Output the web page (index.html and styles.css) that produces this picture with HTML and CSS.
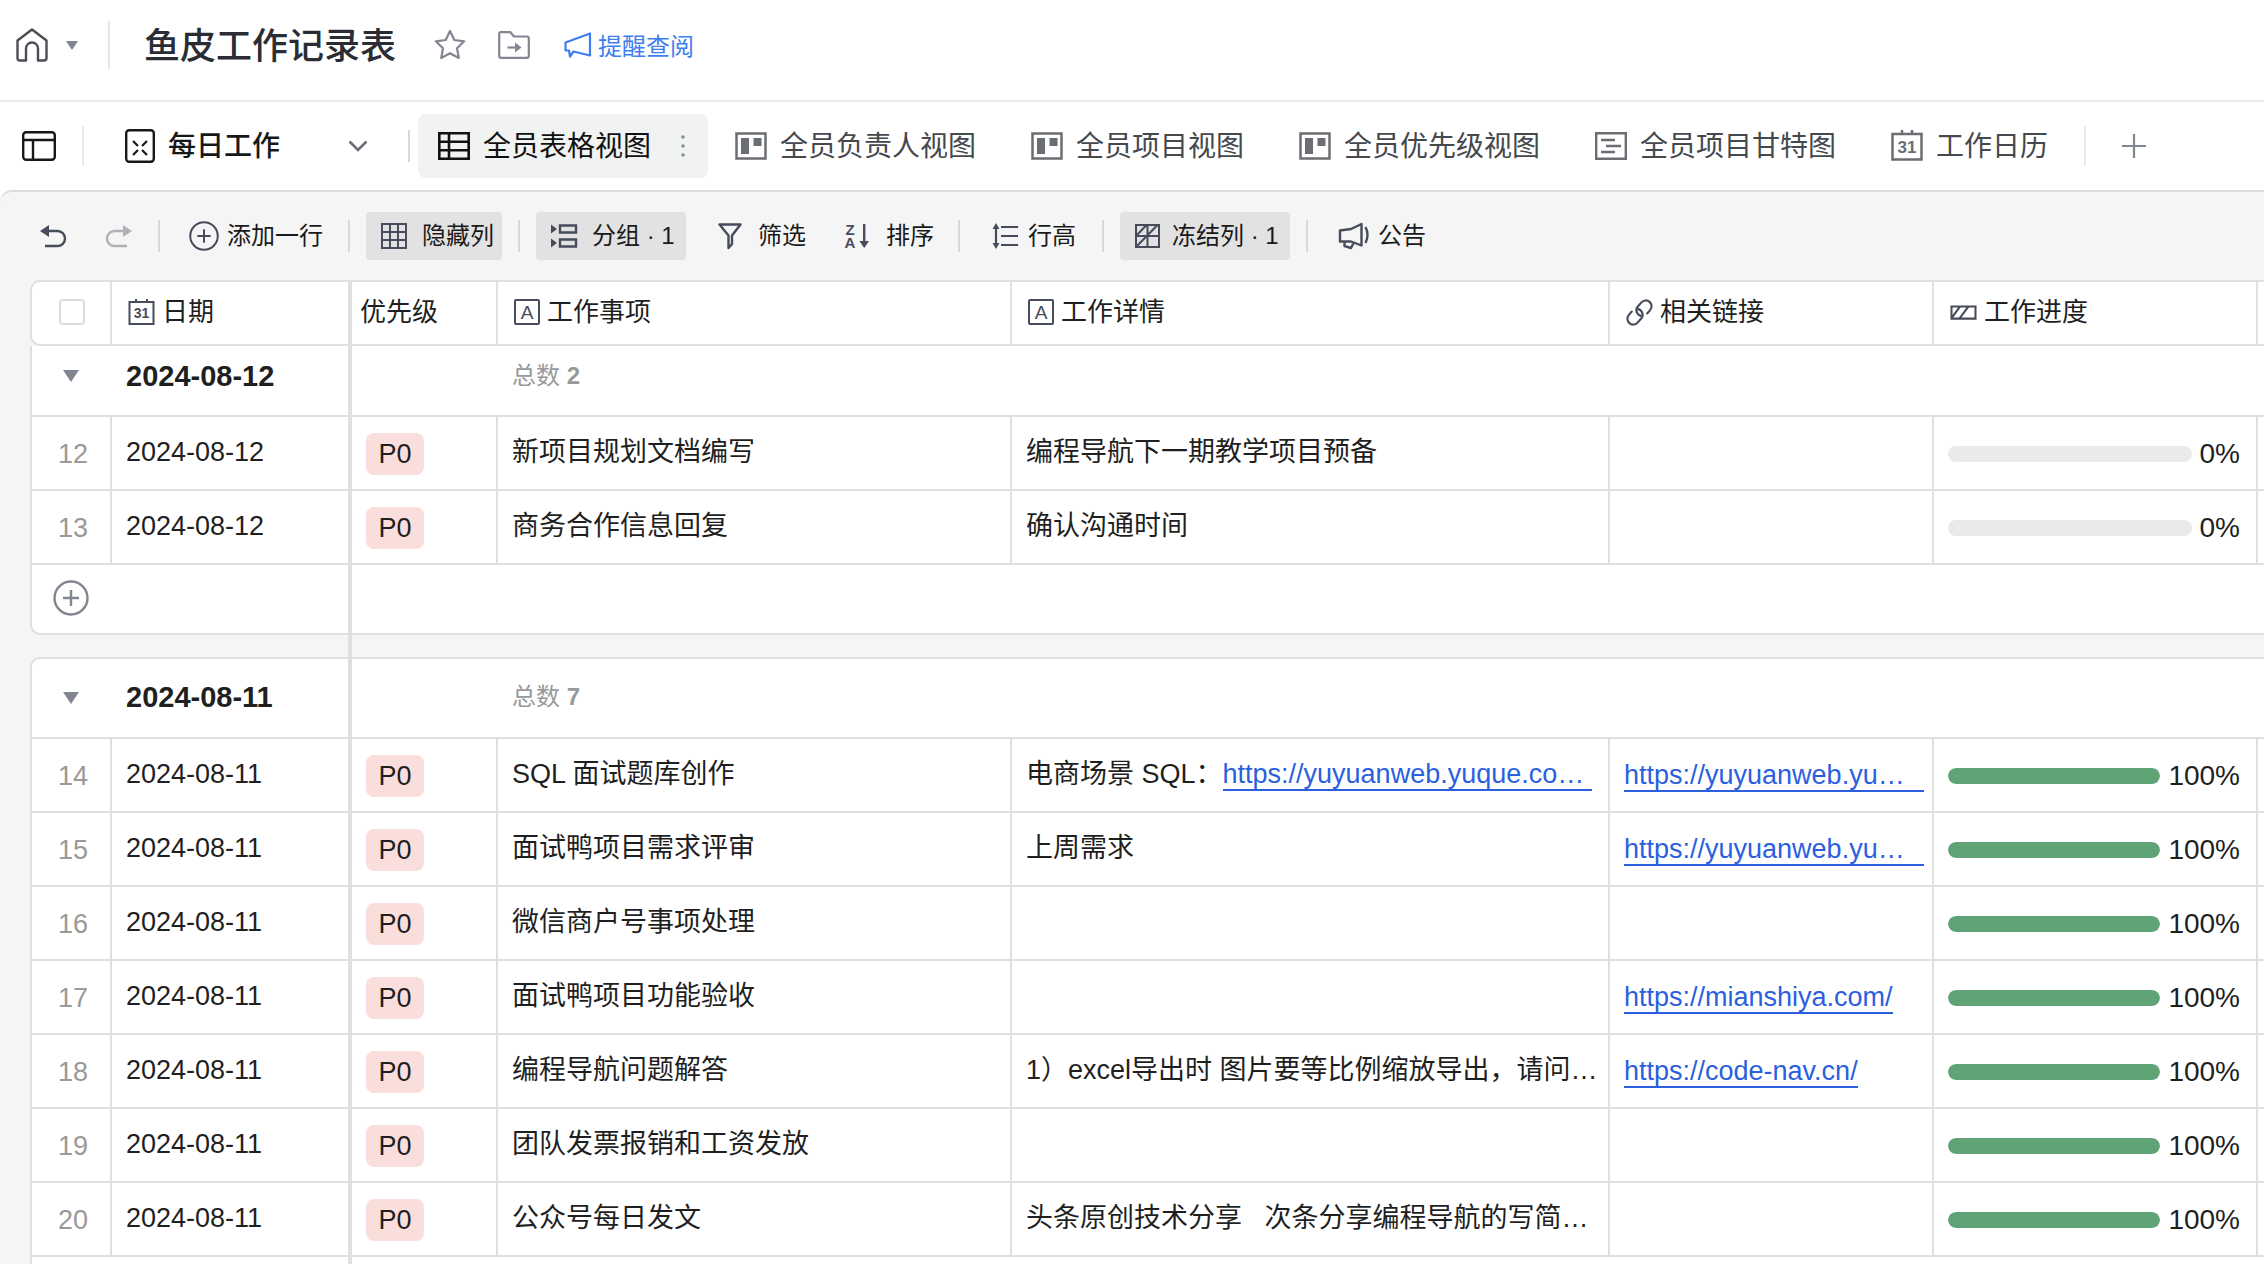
FILE: index.html
```html
<!DOCTYPE html>
<html lang="zh-CN">
<head>
<meta charset="utf-8">
<meta name="viewport" content="width=device-width, initial-scale=1">
<title>鱼皮工作记录表</title>
<link rel="stylesheet" href="styles.css">
</head>
<body>
<svg class="sprite" aria-hidden="true">
  <symbol id="i-board" viewBox="0 0 32 28"><rect x="1.5" y="1.5" width="29" height="25" fill="none" stroke="currentColor" stroke-width="2.5"/><path d="M6 6h8v16H6zM18.500 6h8v8h-8z" fill="currentColor"/></symbol>
  <symbol id="i-plus-circle" viewBox="0 0 36 36"><circle cx="18" cy="18" r="16.500" fill="none" stroke="currentColor" stroke-width="2.400"/><path d="M10 18h16M18 10v16" stroke="currentColor" stroke-width="2.400"/></symbol>
  <symbol id="i-down" viewBox="0 0 16 12"><path d="M0 0h16L8 12z" fill="currentColor"/></symbol>
</svg>

<header class="topbar">
  <button class="plain home" aria-label="首页">
    <svg width="32" height="34" viewBox="0 0 32 34" fill="none" stroke="currentColor" stroke-width="2.400" stroke-linejoin="round"><path d="M1.500 12.500 16 1.500l14.500 11V30q0 2.500-2.500 2.500h-6V20.500a6 6 0 0 0-12 0v12H4Q1.500 32.500 1.500 30z"/></svg>
    <svg class="caret" width="12" height="9"><use href="#i-down"/></svg>
  </button>
  <span class="rule rule-tall"></span>
  <h1 class="title">鱼皮工作记录表</h1>
  <button class="plain star" aria-label="收藏">
    <svg width="32" height="32" viewBox="0 0 32 32" fill="none" stroke="currentColor" stroke-width="2.200" stroke-linejoin="round"><path d="m16 2 4.300 9 9.900 1.300-7.200 6.900 1.800 9.800L16 24.200 7.200 29 9 19.200l-7.200-6.900L11.700 11z"/></svg>
  </button>
  <button class="plain folder" aria-label="移动到">
    <svg width="32" height="28" viewBox="0 0 32 28" fill="none" stroke="currentColor" stroke-width="2.200" stroke-linejoin="round"><path d="M1.200 3q0-1.800 1.800-1.800h9.500L16 5.500h13q1.800 0 1.800 1.800V25q0 1.800-1.800 1.800H3Q1.200 26.800 1.200 25z"/><path d="M9.500 16.500H20"/><path d="m17 11.500 6.500 5-6.500 5z" fill="currentColor" stroke="none"/></svg>
  </button>
  <button class="plain remind">
    <svg width="28" height="26" viewBox="0 0 28 26" fill="none" stroke="currentColor" stroke-width="2.200" stroke-linejoin="round"><path d="M26 1.500v22L9.500 19.500 6 24.500l-1-6H1.500V10.500z"/></svg>
    <span>提醒查阅</span>
  </button>
</header>

<nav class="tabs">
  <button class="plain side" aria-label="侧栏">
    <svg width="34" height="30" viewBox="0 0 34 30" fill="none" stroke="currentColor" stroke-width="2.400"><rect x="1.200" y="1.200" width="31.600" height="27.600" rx="3"/><path d="M1 9h32M11 9v20"/></svg>
  </button>
  <span class="rule rule-mid"></span>
  <button class="plain sheet">
    <svg width="30" height="34" viewBox="0 0 30 34" fill="none" stroke="currentColor"><rect x="1.200" y="1.200" width="27.600" height="31.600" rx="3" stroke-width="2.400"/><path d="m8 12 5 5M22 12l-5 5M8 26l5-5M22 26l-5-5" stroke-width="2.200"/></svg>
    <span>每日工作</span>
    <svg class="chevron" width="20" height="12" viewBox="0 0 20 12" fill="none" stroke="currentColor" stroke-width="2.600"><path d="m1.500 1.500 8.500 8.500 8.500-8.500"/></svg>
  </button>
  <span class="rule"></span>
  <button class="tab tab-active">
    <svg width="32" height="28" viewBox="0 0 32 28" fill="none" stroke="currentColor" stroke-width="2.600"><path d="M1.300 1.300h29.400v25.400H1.300zM1 9.800h30M1 18.200h30M11 1v26"/></svg>
    <span>全员表格视图</span>
    <svg class="dots" width="4" height="24" viewBox="0 0 4 24" fill="currentColor"><circle cx="2" cy="3" r="1.800"/><circle cx="2" cy="12" r="1.800"/><circle cx="2" cy="21" r="1.800"/></svg>
  </button>
  <button class="tab"><svg width="32" height="28"><use href="#i-board"/></svg><span>全员负责人视图</span></button>
  <button class="tab"><svg width="32" height="28"><use href="#i-board"/></svg><span>全员项目视图</span></button>
  <button class="tab"><svg width="32" height="28"><use href="#i-board"/></svg><span>全员优先级视图</span></button>
  <button class="tab"><svg width="32" height="28" viewBox="0 0 32 28" fill="none" stroke="currentColor" stroke-width="2.400"><path d="M1.200 1.200h29.600v25.600H1.200zM6 8h14M11 14h15M6 20h14"/></svg><span>全员项目甘特图</span></button>
  <button class="tab"><svg width="32" height="32" viewBox="0 0 32 32"><path d="M1.500 4h29v25.500h-29zM11 0v4M21 0v4" fill="none" stroke="currentColor" stroke-width="2.500"/><text x="16" y="23" text-anchor="middle" font-size="17" font-weight="700" fill="currentColor">31</text></svg><span>工作日历</span></button>
  <span class="rule rule-mid rule-end"></span>
  <button class="plain new-view" aria-label="新建视图"><svg width="24" height="24" viewBox="0 0 24 24" stroke="currentColor" stroke-width="2.200"><path d="M0 12h24M12 0v24"/></svg></button>
</nav>

<main class="panel">
  <div class="toolbar">
    <button class="plain undo" aria-label="撤销"><svg width="28" height="24" viewBox="0 0 28 24" fill="none" stroke="currentColor" stroke-width="2.400"><path d="M7 7h10.500a7.500 7.500 0 0 1 0 15H5"/><path d="m0 7 9-6v12z" fill="currentColor" stroke="none"/></svg></button>
    <button class="plain redo" aria-label="重做"><svg width="28" height="24" viewBox="0 0 28 24" fill="none" stroke="currentColor" stroke-width="2.400"><path d="M21 7H10.500a7.500 7.500 0 0 0 0 15H23"/><path d="m28 7-9-6v12z" fill="currentColor" stroke="none"/></svg></button>
    <span class="rule"></span>
    <button class="tool add"><svg width="30" height="30"><use href="#i-plus-circle"/></svg><span>添加一行</span></button>
    <span class="rule"></span>
    <button class="tool tool-on"><svg width="28" height="28" viewBox="0 0 28 28" fill="none" stroke="currentColor" stroke-width="2"><path d="M2 2h24v24H2zM2 10h24M2 18h24M10 2v24M18 2v24"/></svg><span>隐藏列</span></button>
    <span class="rule"></span>
    <button class="tool tool-on group-by"><svg width="28" height="28" viewBox="0 0 28 28" fill="none" stroke="currentColor" stroke-width="2.400"><path d="M10 3.500h16v7H10zM10 17.500h16v7H10z"/><path d="m1 2.500 6 4.500-6 4.500zM1 16.500l6 4.500-6 4.500z" fill="currentColor" stroke="none"/></svg><span>分组 · 1</span></button>
    <button class="tool filter"><svg width="24" height="28" viewBox="0 0 24 28" fill="none" stroke="currentColor" stroke-width="2.400" stroke-linejoin="round"><path d="M1.500 2.500h21l-8.500 11V22l-3.500 4V13.500z"/></svg><span>筛选</span></button>
    <button class="tool sort"><svg width="26" height="28" viewBox="0 0 26 28" fill="currentColor"><text x="6" y="13" text-anchor="middle" font-size="15" font-weight="700">Z</text><text x="6" y="26" text-anchor="middle" font-size="15" font-weight="700">A</text><path d="M19 2h2.400v17H25l-4.800 7-4.800-7H19z"/></svg><span>排序</span></button>
    <span class="rule"></span>
    <button class="tool height"><svg width="26" height="28" viewBox="0 0 26 28" fill="none" stroke="currentColor" stroke-width="2.200"><path d="M9 5h17M9 14h17M9 23h17M4 5v18"/><path d="m4 1 3.500 6h-7zM4 27l3.500-6h-7z" fill="currentColor" stroke="none"/></svg><span>行高</span></button>
    <span class="rule"></span>
    <button class="tool tool-on freeze"><svg width="26" height="28" viewBox="0 0 26 28" fill="none" stroke="currentColor" stroke-width="2"><path d="M2 3h23v22H2zM2 14h23M13.500 3v22M2 14 12.500 3M2 25 23.500 3M13.500 14v11"/></svg><span>冻结列 · 1</span></button>
    <span class="rule"></span>
    <button class="tool notice"><svg width="32" height="30" viewBox="0 0 32 30" fill="none" stroke="currentColor" stroke-width="2.400" stroke-linejoin="round"><path d="M2 9.500 13 8l10.500-5v21.500L13 20.500H2zM6.500 20.500V25l6.500 2 2.500-5"/><path d="M27.500 6q4 7.500 0 16"/></svg><span>公告</span></button>
  </div>

  <div class="sheet-wrap">
  <table class="grid">
    <colgroup><col class="c-num"><col class="c-date"><col class="c-pri"><col class="c-item"><col class="c-detail"><col class="c-link"><col class="c-prog"><col></colgroup>
    <thead>
      <tr>
        <th class="center"><input class="check" type="checkbox" aria-label="全选"></th>
        <th><span class="head"><svg width="27" height="26" viewBox="0 0 27 26"><path d="M1.500 3h24v22h-24zM8 0v3M19 0v3" fill="none" stroke="currentColor" stroke-width="2"/><text x="13.500" y="19" text-anchor="middle" font-size="14" font-weight="700" fill="currentColor">31</text></svg>日期</span></th>
        <th class="tight"><span class="head">优先级</span></th>
        <th><span class="head"><svg width="26" height="26" viewBox="0 0 26 26"><rect x="1" y="1" width="24" height="24" rx="1" fill="none" stroke="currentColor" stroke-width="2"/><text x="13" y="20" text-anchor="middle" font-size="19" fill="currentColor">A</text></svg>工作事项</span></th>
        <th><span class="head"><svg width="26" height="26" viewBox="0 0 26 26"><rect x="1" y="1" width="24" height="24" rx="1" fill="none" stroke="currentColor" stroke-width="2"/><text x="13" y="20" text-anchor="middle" font-size="19" fill="currentColor">A</text></svg>工作详情</span></th>
        <th><span class="head"><svg width="27" height="27" viewBox="0 0 28 28" fill="none" stroke="currentColor" stroke-width="2.200" stroke-linecap="round"><path d="M15.500 17.500a6 6 0 0 1-3.500-9.500l4-4.500a6 6 0 0 1 9 8l-3 3.500"/><path d="M12.500 10.500A6 6 0 0 1 16 20l-4 4.500a6 6 0 0 1-9-8L6 13"/></svg>相关链接</span></th>
        <th><span class="head"><svg width="27" height="15" viewBox="0 0 28 16" fill="none" stroke="currentColor" stroke-width="2.200"><path d="M1.200 1.500h25.600v13H1.200zM2 13 10 2M10 14l9-12"/></svg>工作进度</span></th>
        <th></th>
      </tr>
    </thead>
    <tbody>
      <tr class="group group-cut">
        <td class="center"><button class="plain fold" aria-label="折叠"><svg width="16" height="12"><use href="#i-down"/></svg></button></td>
        <th scope="rowgroup">2024-08-12</th>
        <td></td>
        <td class="total" colspan="5">总数 <b>2</b></td>
      </tr>
      <tr><td class="num">12</td><td>2024-08-12</td><td class="low"><span class="tag">P0</span></td><td>新项目规划文档编写</td><td>编程导航下一期教学项目预备</td><td></td><td class="low"><label class="prog"><progress max="100" value="0"></progress>0%</label></td><td></td></tr>
      <tr><td class="num">13</td><td>2024-08-12</td><td class="low"><span class="tag">P0</span></td><td>商务合作信息回复</td><td>确认沟通时间</td><td></td><td class="low"><label class="prog"><progress max="100" value="0"></progress>0%</label></td><td></td></tr>
      <tr class="append">
        <td class="center"><button class="plain plus" aria-label="添加一行"><svg width="36" height="36"><use href="#i-plus-circle"/></svg></button></td>
        <td></td><td colspan="6"></td>
      </tr>
    </tbody>
    <tbody>
      <tr class="space"><td colspan="2"></td><td colspan="6"></td></tr>
      <tr class="group group-top">
        <td class="center"><button class="plain fold" aria-label="折叠"><svg width="16" height="12"><use href="#i-down"/></svg></button></td>
        <th scope="rowgroup">2024-08-11</th>
        <td></td>
        <td class="total" colspan="5">总数 <b>7</b></td>
      </tr>
      <tr><td class="num">14</td><td>2024-08-11</td><td class="low"><span class="tag">P0</span></td><td>SQL 面试题库创作</td><td><span class="mixed">电商场景 SQL：<a class="link link-fill" href="#">https://yuyuanweb.yuque.co…</a></span></td><td class="wide"><span class="mixed"><a class="link link-fill" href="#">https://yuyuanweb.yu…</a></span></td><td class="low"><label class="prog"><progress max="100" value="100"></progress>100%</label></td><td></td></tr>
      <tr><td class="num">15</td><td>2024-08-11</td><td class="low"><span class="tag">P0</span></td><td>面试鸭项目需求评审</td><td>上周需求</td><td class="wide"><span class="mixed"><a class="link link-fill" href="#">https://yuyuanweb.yu…</a></span></td><td class="low"><label class="prog"><progress max="100" value="100"></progress>100%</label></td><td></td></tr>
      <tr><td class="num">16</td><td>2024-08-11</td><td class="low"><span class="tag">P0</span></td><td>微信商户号事项处理</td><td></td><td></td><td class="low"><label class="prog"><progress max="100" value="100"></progress>100%</label></td><td></td></tr>
      <tr><td class="num">17</td><td>2024-08-11</td><td class="low"><span class="tag">P0</span></td><td>面试鸭项目功能验收</td><td></td><td class="wide"><span class="mixed"><a class="link" href="#">https://mianshiya.com/</a></span></td><td class="low"><label class="prog"><progress max="100" value="100"></progress>100%</label></td><td></td></tr>
      <tr><td class="num">18</td><td>2024-08-11</td><td class="low"><span class="tag">P0</span></td><td>编程导航问题解答</td><td>1）excel导出时 图片要等比例缩放导出，请问…</td><td class="wide"><span class="mixed"><a class="link" href="#">https://code-nav.cn/</a></span></td><td class="low"><label class="prog"><progress max="100" value="100"></progress>100%</label></td><td></td></tr>
      <tr><td class="num">19</td><td>2024-08-11</td><td class="low"><span class="tag">P0</span></td><td>团队发票报销和工资发放</td><td></td><td></td><td class="low"><label class="prog"><progress max="100" value="100"></progress>100%</label></td><td></td></tr>
      <tr><td class="num">20</td><td>2024-08-11</td><td class="low"><span class="tag">P0</span></td><td>公众号每日发文</td><td>头条原创技术分享 &nbsp; 次条分享编程导航的写简…</td><td></td><td class="low"><label class="prog"><progress max="100" value="100"></progress>100%</label></td><td></td></tr>
      <tr class="append">
        <td class="center"><button class="plain plus" aria-label="添加一行"><svg width="36" height="36"><use href="#i-plus-circle"/></svg></button></td>
        <td></td><td colspan="6"></td>
      </tr>
    </tbody>
  </table>
  </div>
</main>
</body>
</html>
```
FILE: styles.css
```css
:root {
  --line: #dfdfdf;
  --ink: #1f1f1f;
  --icon: #464c5b;
  --muted: #828690;
}

* { box-sizing: border-box; }

body {
  margin: 0;
  height: 100vh;
  display: flex;
  flex-direction: column;
  overflow: hidden;
  background: #fff;
  color: var(--ink);
  font-family: "Liberation Sans", "Noto Sans CJK SC", sans-serif;
  font-size: 27px;
  white-space: nowrap;
}

button {
  display: flex;
  align-items: center;
  flex: none;
  margin: 0;
  padding: 0;
  border: 0;
  background: none;
  color: inherit;
  font: inherit;
  cursor: pointer;
}

svg { flex: none; display: block; overflow: visible; }
.sprite { position: absolute; width: 0; height: 0; }

.rule { flex: none; width: 2px; height: 32px; background: #d9d9d9; }
.rule-tall { height: 48px; background: #e6e6e6; }
.rule-mid { height: 40px; background: #ececec; }

/* Document header */
.topbar {
  flex: none;
  display: flex;
  align-items: center;
  height: 102px;
  padding: 0 16px 10px;
  border-bottom: 2px solid #ebebeb;
}
.home { gap: 18px; margin-right: 30px; color: #4a4d54; }
.caret { color: var(--muted); }
.title {
  margin: 0 38px 0 34px;
  padding-top: 4px;
  color: #2a2d33;
  font-size: 36px;
  font-weight: 500;
  line-height: 48px;
}
.star, .folder { color: var(--muted); }
.folder { margin: 0 34px 0 32px; }
.remind { gap: 6px; color: #3f7ef0; font-size: 24px; line-height: 32px; }
.remind span { padding-top: 4px; }

/* View tabs */
.tabs {
  flex: none;
  display: flex;
  align-items: center;
  height: 88px;
  padding: 0 22px;
  font-size: 28px;
  line-height: 40px;
}
.tabs span { padding-top: 2px; }
.tabs .rule { padding: 0; }
.side { margin-right: 26px; color: #17181a; }
.sheet { gap: 13px; margin: 0 40px 0 41px; color: #17181a; font-weight: 500; }
.chevron { margin-left: 55px; color: #6a6e76; }
.tab { gap: 13px; height: 64px; padding: 0 28px 0 27px; border-radius: 8px; color: #45484d; }
.tab svg { color: #6a6d72; }
.tab-active { margin-left: 8px; padding: 0 23px 0 20px; background: #f1f3f3; color: #111; }
.tab-active svg { color: #111; }
.tab-active .dots { margin-left: 17px; color: #8a8d92; }
.rule-end { margin: 0 36px 0 8px; }
.new-view { color: var(--muted); }

/* Working area */
.panel {
  flex: 1;
  min-height: 0;
  padding: 20px 0 0 30px;
  border-top: 2px solid #dcdcdc;
  border-top-left-radius: 12px;
  background: #f5f5f5;
  overflow: hidden;
}
.toolbar {
  display: flex;
  align-items: center;
  height: 48px;
  margin-bottom: 20px;
  font-size: 24px;
  line-height: 32px;
}
.undo { margin: 0 36px 0 10px; color: var(--icon); }
.redo { margin-right: 26px; color: #b0b2b8; }
.tool { gap: 14px; height: 48px; color: #1a1a1a; }
.tool svg { color: var(--icon); }
.tool-on { margin: 0 16px; padding: 0 8px 0 14px; border-radius: 4px; background: #e2e2e2; }
.add { gap: 8px; margin: 0 25px 0 29px; }
.group-by { min-width: 150px; }
.filter { margin: 0 38px 0 16px; gap: 16px; }
.sort { margin-right: 24px; gap: 16px; }
.height { gap: 10px; margin: 0 26px 0 32px; }
.freeze { gap: 12px; min-width: 170px; }
.notice { gap: 8px; margin-left: 30px; }

/* Record table */
.sheet-wrap { overflow: hidden; }
.grid {
  width: 100%;
  min-width: 2234px;
  table-layout: fixed;
  border-collapse: separate;
  border-spacing: 0;
}
.c-num { width: 82px; }
.c-date { width: 240px; }
.c-pri { width: 146px; }
.c-item { width: 514px; }
.c-detail { width: 598px; }
.c-link, .c-prog { width: 324px; }

.grid th, .grid td {
  height: 74px;
  padding: 0 16px 2px 14px;
  border: 0 solid var(--line);
  border-width: 0 2px 2px 0;
  background: #fff;
  font-weight: 400;
  line-height: 40px;
  text-align: left;
  vertical-align: middle;
}
.grid tr > :first-child { border-left-width: 2px; }
.grid tr > :nth-child(2) { border-right-width: 4px; }
.grid tr > :last-child { border-right-width: 0; }

.grid thead th { height: 66px; padding: 0 16px 2px; border-top-width: 2px; font-size: 26px; }
.grid thead th:first-child { border-radius: 10px 0 0 10px; }
.grid thead .tight { padding-left: 8px; }
.head { display: flex; align-items: center; gap: 7px; }
.head svg { color: var(--icon); }

.grid .center { padding: 0 2px 0 0; text-align: center; }
.grid thead .center { padding: 0 0 2px 2px; }
.center button { margin: 0 auto; }
.check {
  appearance: none;
  display: block;
  width: 26px;
  height: 26px;
  margin: 0 auto;
  border: 2px solid #dcdcdc;
  border-radius: 4px;
  background: #fff;
}
.fold, .plus { color: var(--muted); }

.grid .num { padding: 2px 0 0 4px; color: #999; text-align: center; }
.grid .low { padding-top: 2px; padding-bottom: 0; }
.grid .wide { padding-right: 8px; }
.tag {
  display: block;
  width: 58px;
  height: 42px;
  border-radius: 8px;
  background: #fadedb;
  line-height: 42px;
  text-align: center;
}

.grid .group th { font-size: 29px; font-weight: 700; }
.grid .group td:first-child, .grid .group td:nth-child(3) { border-right-width: 0; }
.grid .group-cut > * { height: 71px; padding-bottom: 10px; }
.grid .group-top > * { height: 82px; border-top-width: 2px; }
.grid .group-top td:first-child { border-top-left-radius: 10px; }
.grid .total { color: #999; font-size: 24px; }

.grid .append > * { height: 70px; }
.grid .append td:first-child { border-right-width: 0; border-bottom-left-radius: 10px; padding-bottom: 2px; }
.grid .space > td { height: 22px; padding: 0; border-width: 0; background: none; }
.grid .space > td:first-child { border-right-width: 4px; }

.mixed { display: flex; align-items: baseline; }
.link {
  padding-top: 4px;
  border-bottom: 2px solid #2b5fe0;
  color: #2b5fe0;
  line-height: 30px;
  text-decoration: none;
}
.link-fill { flex: 1; }

.prog { display: flex; align-items: center; gap: 8px; font-size: 28px; }
progress {
  appearance: none;
  flex: 1;
  min-width: 0;
  height: 16px;
  border: 0;
  border-radius: 8px;
  background: #e9eaeb;
  overflow: hidden;
}
progress::-webkit-progress-bar { background: #e9eaeb; }
progress::-webkit-progress-value { background: #5fa377; border-radius: 8px; }
```
